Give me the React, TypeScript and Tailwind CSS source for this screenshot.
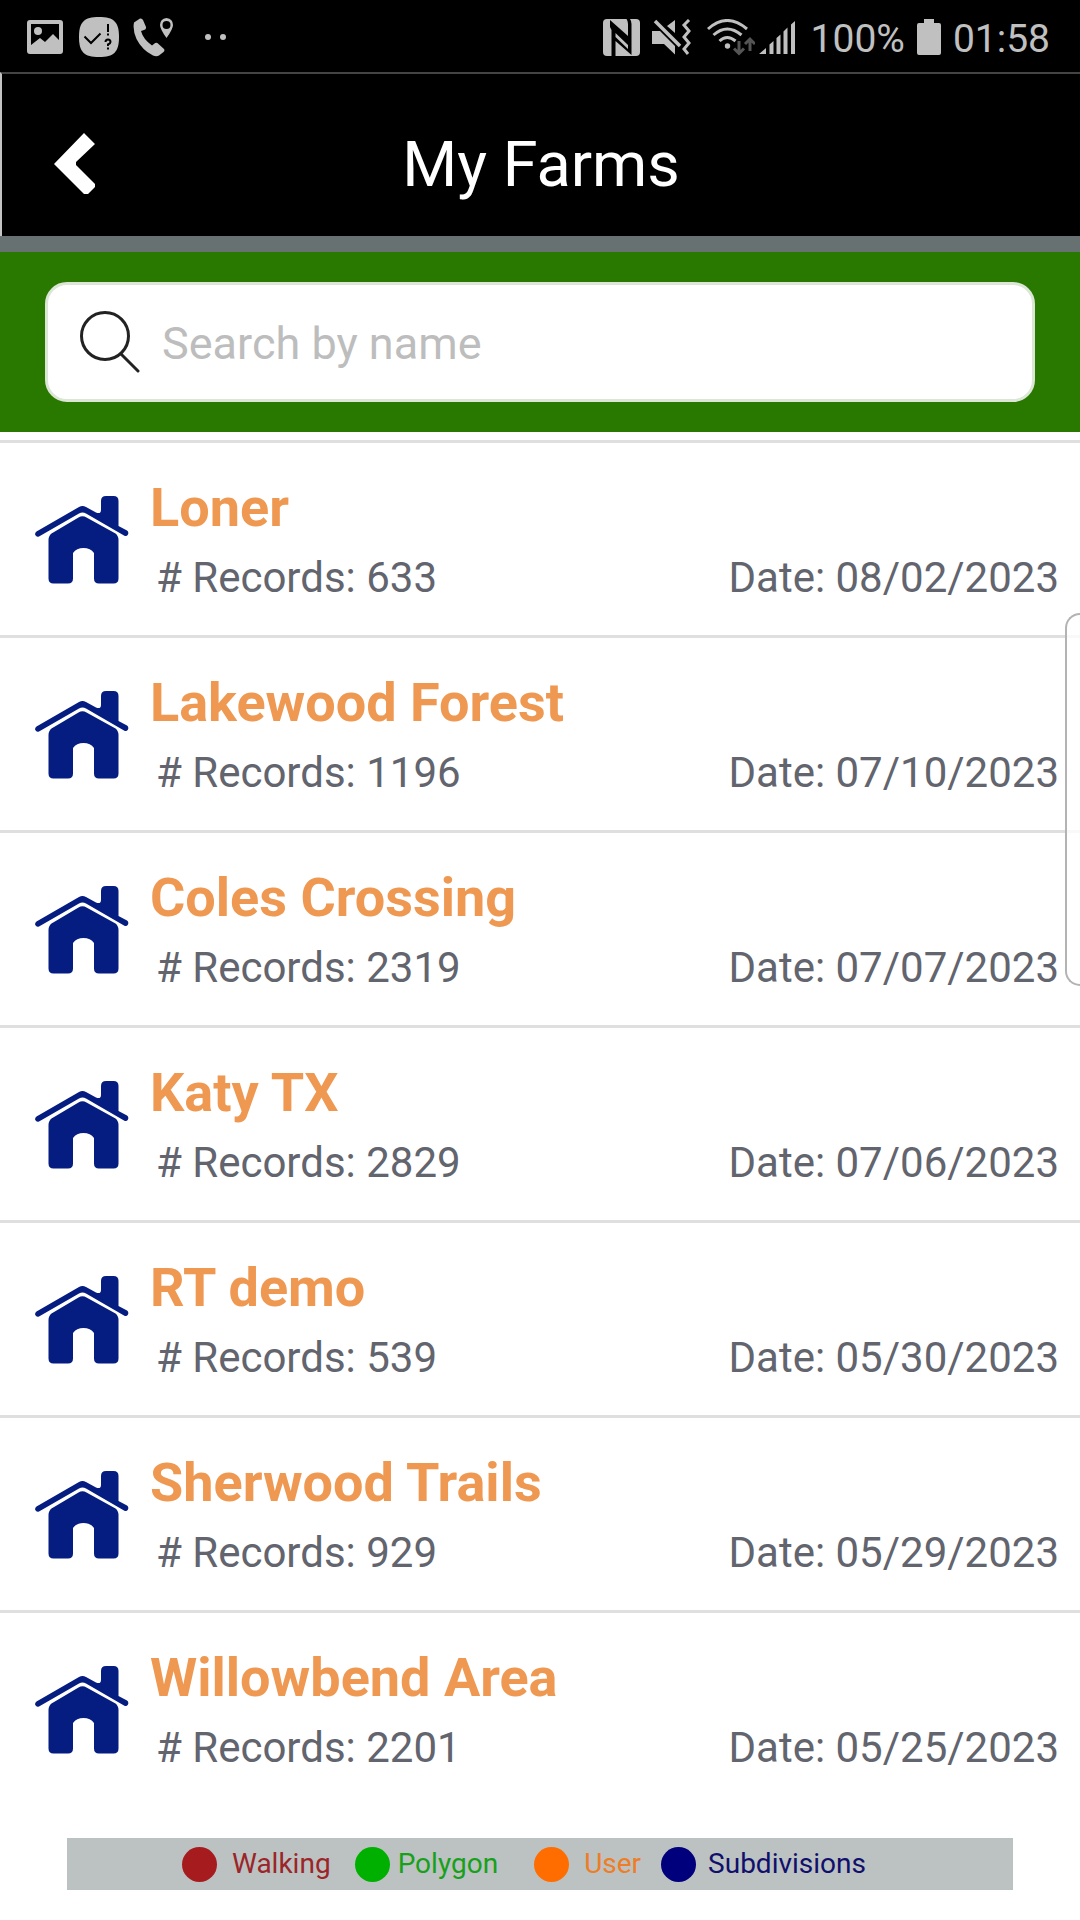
import React from 'react';

interface Farm {
  name: string;
  records: number;
  date: string;
}

const farms: Farm[] = [
  { name: 'Loner', records: 633, date: '08/02/2023' },
  { name: 'Lakewood Forest', records: 1196, date: '07/10/2023' },
  { name: 'Coles Crossing', records: 2319, date: '07/07/2023' },
  { name: 'Katy TX', records: 2829, date: '07/06/2023' },
  { name: 'RT demo', records: 539, date: '05/30/2023' },
  { name: 'Sherwood Trails', records: 929, date: '05/29/2023' },
  { name: 'Willowbend Area', records: 2201, date: '05/25/2023' },
];

const HouseIcon = () => (
  <svg width="94" height="88" viewBox="0 0 94 88" fill="#051c80" className="shrink-0" aria-hidden="true">
    <path d="M1.5 35.5 44 11Q47.500 9 51 11L61 16.500Q66 18.500 66 14V5Q66 0 71 0H78.500Q83.500 0 83.500 5V30L92 34.500Q94 36 93 38.500Q91.500 41 89 39.500L51 17.500Q47.500 15.500 44 17.500L4 40.500Q1.500 41.500 .3 39Q-.5 37 1.500 35.500Z" />
    <path d="M43.500 21.500Q47.500 19 51.500 21.500L80.500 37.500Q83.500 40 83.500 44V82.500Q83.500 87.500 78.500 87.500H64Q59 87.500 59 82.500V57Q55.500 52 48.500 52Q41.500 52 38 57V82.500Q38 87.500 33 87.500H18.500Q13.500 87.500 13.500 82.500V44Q13.500 40 16.500 37.500Z" />
  </svg>
);

const StatusBar = () => (
  <div className="flex h-[72px] items-center justify-between bg-black pt-0.5 pr-[30px] pl-[27px] text-[#c0c0c0]">
    <div className="flex items-center gap-4">
      <svg width="36" height="34" viewBox="0 0 36 34" fill="currentColor" aria-hidden="true">
        <path fillRule="evenodd" d="M3 0H33Q36 0 36 3V31Q36 34 33 34H3Q0 34 0 31V3Q0 0 3 0ZM4 4V25L13 18L18 22L26 14L32 20V4Z" />
        <circle cx="11" cy="11" r="4" />
      </svg>
      <svg width="40" height="40" viewBox="0 0 40 40" aria-hidden="true">
        <path d="M20 0C35 0 40 5 40 20S35 40 20 40 0 35 0 20 5 0 20 0Z" fill="currentColor" />
        <g fill="none" stroke="#000" strokeWidth="2">
          <path d="M5.500 19.500 12 26 21.500 16.500M29 7V15M29 16.500V18.500M29 30.500V32.500" />
          <path d="M26.500 25Q26.500 22.500 29 22.500T31.500 25Q31.500 26.500 29 27.500V29" />
        </g>
      </svg>
      <svg width="40" height="39" viewBox="0 0 40 39" fill="currentColor" className="-ml-0.5" aria-hidden="true">
        <path d="M1 4.500 7 .5Q9 0 10 2L13 9Q13.500 11.500 11 12L8 13Q10 21 19 27.500L21.500 25.500Q23.500 24 25.500 26L31 31Q32 32.500 30.500 34L26 37.500Q23.500 39 20 37.500Q9 32 3.500 21Q-.5 12 1 4.500Z" />
        <path fillRule="evenodd" d="M33.500 0Q40 1 40 7Q40 11 33.500 20Q27 11 27 7Q27 1 33.500 0ZM33.500 3A4 4 0 1 0 33.500 11A4 4 0 1 0 33.500 3Z" />
      </svg>
      <svg width="22" height="6" viewBox="0 0 22 6" fill="currentColor" className="ml-4" aria-hidden="true">
        <circle cx="3" cy="3" r="3" />
        <circle cx="18" cy="3" r="3" />
      </svg>
    </div>

    <div className="flex items-center gap-3">
      <svg width="37" height="37" viewBox="0 0 37 37" aria-hidden="true">
        <rect width="37" height="37" rx="4" fill="currentColor" />
        <path d="M7 1 25 17V5Q25 2 23.500 0H27Q28.500 2 28.500 5V36L12.500 22V37H8.500V11L7 8ZM12.500 14V18L25 30V26Z" fill="#000" fillRule="evenodd" />
      </svg>
      <svg width="39" height="37" viewBox="0 0 39 37" fill="currentColor" aria-hidden="true">
        <path d="M23 1V14L15 7ZM0 12H8L23 27V35.500L12 25H0Z" />
        <path d="M3 2 28 27" stroke="currentColor" strokeWidth="3.500" />
        <path d="M37 1 32 6 37 12 32 18 37 24 32 30 36 35" fill="none" stroke="currentColor" strokeWidth="3" />
      </svg>
      <svg width="48" height="37" viewBox="0 0 48 37" fill="none" stroke="currentColor" strokeWidth="3" className="ml-1" aria-hidden="true">
        <path d="M1 10Q20 -7 40 10M6.500 16Q20 4 34.500 16M12.500 22Q20 15 28.500 22" />
        <circle cx="20.500" cy="27" r="2.700" fill="currentColor" stroke="none" />
        <path d="M32 22V34M27 29.500 32 34.500 37 29.500M43 32V20M38 25 43 20 48 25" stroke="#555" />
      </svg>
      <svg width="36" height="33" viewBox="0 0 36 33" fill="currentColor" className="-ml-2" aria-hidden="true">
        <path d="M0 33 7 27V33ZM10.500 23.500 14.500 20V33H10.500ZM17.500 17 21.500 13.500V33H17.500ZM24.500 10.500 28.500 6.500V33H24.500ZM32 3.500 36 0V33H32Z" />
      </svg>
      <span className="ml-1 pt-1 text-[39px] leading-none">100%</span>
      <svg width="24" height="36" viewBox="0 0 24 36" fill="currentColor" aria-hidden="true">
        <path d="M7 0H17V4H22Q24 4 24 6V34Q24 36 22 36H2Q0 36 0 34V6Q0 4 2 4H7Z" />
      </svg>
      <span className="pt-1 text-[39px] leading-none">01:58</span>
    </div>
  </div>
);

const Header = () => (
  <header className="border-b-[16px] border-[#687172] bg-black text-white">
    <div className="grid grid-cols-[1fr_auto_1fr] items-center border-t-2 border-l-2 border-t-[#444] border-l-[#c4c4c4] pt-[34px] pb-[18px]">
      <button type="button" aria-label="Back" className="ml-8 w-fit px-5 py-6">
        <svg width="41" height="62" viewBox="0 0 41 62" fill="currentColor" aria-hidden="true">
          <path d="M0 32 30 1 41 12 22 30V33L41 52V55L34 62H30Z" />
        </svg>
      </button>
      <h1 className="pt-1 text-[63px] leading-[72px]">My Farms</h1>
    </div>
  </header>
);

const SearchBar = () => (
  <div className="bg-[#297900] px-[45px] py-[30px]">
    <label className="flex h-[120px] items-center gap-[22px] rounded-[22px] border-[3px] border-[#dbe6d6] bg-white px-8">
      <svg width="60" height="64" viewBox="0 0 60 64" fill="none" stroke="#222" strokeWidth="3" strokeLinecap="round" className="shrink-0" aria-hidden="true">
        <circle cx="25" cy="26" r="23.500" />
        <path d="M41 44 58 61" />
      </svg>
      <input
        type="text"
        aria-label="Search by name"
        placeholder="Search by name"
        className="min-w-0 flex-1 pt-1 text-[45px] leading-[56px] text-[#62646e] outline-none placeholder:text-[#bdbdbd]"
      />
    </label>
  </div>
);

const FarmRow: React.FC<{ farm: Farm }> = ({ farm }) => (
  <li className="border-b-[3px] border-[#dfdfdf] last:border-b-0">
    <a href="#" className="flex items-center gap-[21px] pt-[33px] pr-[21px] pb-[31px] pl-[35px]">
      <HouseIcon />
      <div className="flex-1">
        <h2 className="text-[54px] leading-[64px] font-bold text-[#ee9852]">{farm.name}</h2>
        <div className="mt-3 flex justify-between pl-1.5 text-[42px] leading-[52px] text-[#62646e]">
          <span># Records: {farm.records}</span>
          <span>Date: {farm.date}</span>
        </div>
      </div>
    </a>
  </li>
);

const Legend = () => (
  <footer className="mx-[67px] mt-[33px] flex h-[52px] items-center bg-[#bcc2c1] pl-[115px] text-[28px] leading-8">
    <div className="flex items-center gap-[15px] text-[#9b2529]">
      <span className="size-[35px] rounded-full bg-[#a61c1e]" />
      Walking
    </div>
    <div className="ml-6 flex items-center gap-2 text-[#18a01b]">
      <span className="size-[35px] rounded-full bg-[#00b000]" />
      Polygon
    </div>
    <div className="ml-9 flex items-center gap-[15px] text-[#ee7d26]">
      <span className="size-[35px] rounded-full bg-[#ff6d00]" />
      User
    </div>
    <div className="ml-5 flex items-center gap-3 text-[#10106c]">
      <span className="size-[35px] rounded-full bg-[#00007c]" />
      Subdivisions
    </div>
  </footer>
);

const App = () => {
  return (
    <div className="min-h-screen bg-white font-['Roboto',sans-serif]">
      <StatusBar />
      <Header />
      <SearchBar />
      <main className="relative pt-2">
        <ul className="border-t-[3px] border-[#dfdfdf]">
          {farms.map((farm) => (
            <FarmRow key={farm.name} farm={farm} />
          ))}
        </ul>
        {/* edge panel handle */}
        <div className="absolute top-[181px] right-0 h-[373px] w-[15px] rounded-l-[20px] border-2 border-r-0 border-[#b3b3b3] bg-white/80" />
      </main>
      <Legend />
    </div>
  );
};

export default App;
